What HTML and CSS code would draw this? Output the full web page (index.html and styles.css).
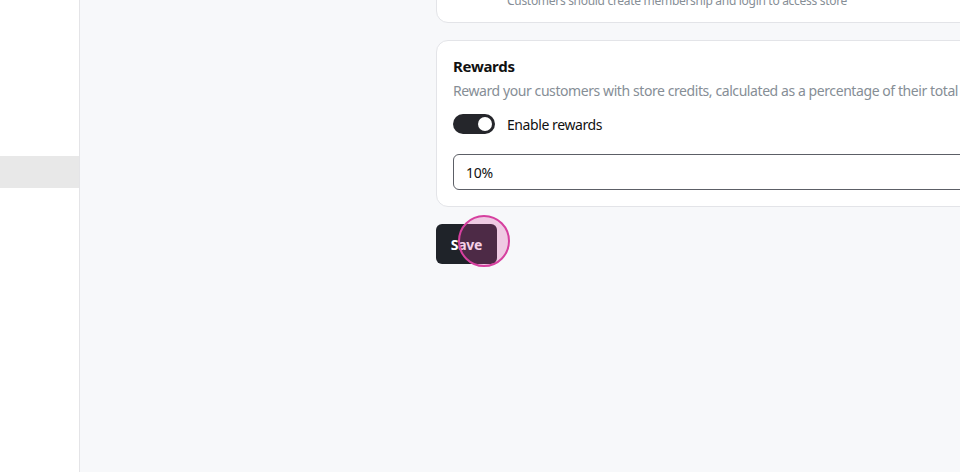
FILE: index.html
```html
<!DOCTYPE html>
<html>
<head>
<meta charset="utf-8">
<link rel="stylesheet" href="styles.css">
</head>
<body>
<div class="app">
  <aside class="sidebar">
    <div class="nav-item"></div>
    <div class="nav-item active"></div>
  </aside>
  <main class="main">
    <div class="content">
      <section class="card card-top">
        <div class="option">
          <div class="option-desc">Customers should create membership and login to access store</div>
        </div>
      </section>
      <section class="card">
        <h2 class="card-title">Rewards</h2>
        <p class="card-desc">Reward your customers with store credits, calculated as a percentage of their total spending</p>
        <label class="toggle-row">
          <span class="toggle"><span class="knob"></span></span>
          <span class="toggle-label">Enable rewards</span>
        </label>
        <div class="input">10%</div>
      </section>
      <div class="actions">
        <button class="btn">Save</button>
        <span class="click-ring"></span>
      </div>
    </div>
  </main>
</div>
</body>
</html>
```
FILE: styles.css
```css
* { box-sizing: border-box; }
html, body { margin: 0; padding: 0; }
body {
  font-family: "Noto Sans", "Open Sans", sans-serif;
  color: #111;
  width: 960px;
  height: 472px;
  overflow: hidden;
}
.app {
  display: flex;
  height: 472px;
}
.sidebar {
  width: 80px;
  flex: none;
  background: #fff;
  border-right: 1px solid #e4e4e7;
  padding-top: 124px;
  display: flex;
  flex-direction: column;
}
.nav-item {
  height: 32px;
}
.nav-item.active {
  background: #e8e8e8;
}
.main {
  flex: 1;
  background: #f7f8fa;
  overflow: hidden;
}
.content {
  margin-top: -31px;
  margin-left: 356px;
  width: 700px;
  display: flex;
  flex-direction: column;
  gap: 17px;
}
.card {
  background: #fff;
  border: 1px solid #e3e4e8;
  border-radius: 12px;
  padding: 14px 16px 16px;
}
.card-top {
  padding: 22px 16px 12px 70px;
}
.option-desc {
  font-size: 12px;
  color: #868e96;
  line-height: 18px;
  letter-spacing: -0.3px;
}
.card-title {
  margin: 0;
  font-size: 15px;
  font-weight: 700;
  line-height: 22px;
  color: #111;
  letter-spacing: -0.3px;
}
.card-desc {
  margin: 4px 0 0;
  font-size: 14px;
  line-height: 20px;
  color: #868e96;
  white-space: nowrap;
  letter-spacing: -0.42px;
}
.toggle-row {
  display: flex;
  align-items: center;
  gap: 12px;
  margin-top: 13px;
}
.toggle {
  width: 42px;
  height: 20px;
  border-radius: 10px;
  background: #25262b;
  display: flex;
  align-items: center;
  justify-content: flex-end;
  padding-right: 3px;
}
.knob {
  width: 14px;
  height: 14px;
  border-radius: 50%;
  background: #fff;
}
.toggle-label {
  font-size: 14px;
  color: #111;
  letter-spacing: -0.42px;
}
.input {
  margin-top: 20px;
  height: 36px;
  border: 1px solid #5c5f66;
  border-radius: 6px;
  padding: 0 12px;
  display: flex;
  align-items: center;
  font-size: 14px;
  color: #111;
  letter-spacing: -0.3px;
}
.actions {
  position: relative;
  display: flex;
}
.btn {
  height: 40px;
  width: 61px;
  border: none;
  border-radius: 6px;
  background: #1f2329;
  color: #fff;
  font-family: inherit;
  font-size: 14px;
  font-weight: 700;
  padding: 0;
  letter-spacing: -0.3px;
}
.click-ring {
  position: absolute;
  left: 22px;
  top: -9px;
  width: 52px;
  height: 52px;
  border-radius: 50%;
  border: 2px solid #d6409f;
  background: rgba(214, 64, 159, 0.25);
}
```
